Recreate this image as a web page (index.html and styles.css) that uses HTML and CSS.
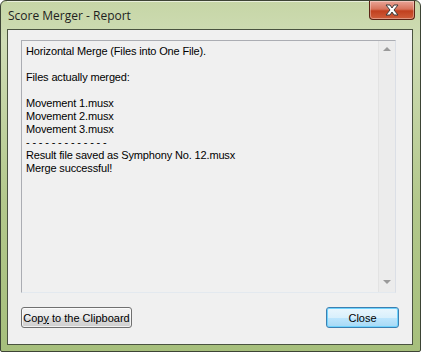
FILE: index.html
```html
<!DOCTYPE html>
<html lang="en">
<head>
  <meta charset="UTF-8">
  <title>Score Merger - Report</title>
  <link rel="stylesheet" href="styles.css">
</head>
<body>
  <div class="window">
    <div class="titlebar">
      <span class="title">Score Merger - Report</span>
      <div class="close-x">
        <svg width="22" height="12" viewBox="0 0 22 12">
          <path d="M5 1 L9 1 L11 4 L13 1 L17 1 L13 6 L17 11 L13 11 L11 8 L9 11 L5 11 L9 6 Z" fill="#fff" stroke="#3b3b3b" stroke-width="1" stroke-linejoin="round"/>
        </svg>
      </div>
    </div>
    <div class="client">
      <div class="report">
        <div class="report-text">
          <p>Horizontal Merge (Files into One File).</p>
          <p>&nbsp;</p>
          <p>Files actually merged:</p>
          <p>&nbsp;</p>
          <p>Movement 1.musx</p>
          <p>Movement 2.musx</p>
          <p>Movement 3.musx</p>
          <p>- - - - - - - - - - - - -</p>
          <p>Result file saved as Symphony No. 12.musx</p>
          <p>Merge successful!</p>
        </div>
        <div class="scrollbar">
          <span class="arrow up"></span>
          <span class="arrow down"></span>
        </div>
      </div>
      <div class="buttons">
        <button class="btn btn-copy">Cop<u>y</u> to the Clipboard</button>
        <button class="btn btn-default">Close</button>
      </div>
    </div>
  </div>
</body>
</html>
```

FILE: styles.css
```css
body {
  margin: 0;
  background-color: #ffffff;
}

.window {
  width: 421px;
  height: 352px;
  box-sizing: border-box;
  border: 1px solid #3d4435;
  border-radius: 6px 6px 2px 2px;
  background: linear-gradient(to bottom, #c6d6a6 0px, #cfdcb5 40px, #b3c88c 200px, #a6bf7c 352px);
  padding: 0 7px 6px 6px;
  display: flex;
  flex-direction: column;
}

.titlebar {
  height: 28px;
  display: flex;
  align-items: flex-start;
  justify-content: space-between;
  box-shadow: inset 0 1px 0 rgba(255, 255, 255, 0.6);
}

.title {
  font-family: "Open Sans", "Noto Sans", sans-serif;
  font-size: 12px;
  color: #1e1e1e;
  margin-top: 6px;
  margin-left: 1px;
}

.close-x {
  width: 46px;
  height: 19px;
  margin-right: -2px;
  box-sizing: border-box;
  border: 1px solid #5a2416;
  border-top: none;
  border-radius: 0 0 4px 4px;
  background: linear-gradient(to bottom, #e9a597 0%, #d7735b 45%, #c1401f 55%, #cf5e3b 100%);
  display: flex;
  align-items: center;
  justify-content: center;
  box-shadow: inset 0 0 0 1px rgba(255, 255, 255, 0.35);
}

.client {
  flex: 1;
  background-color: #f0f0f0;
  border: 1px solid #4a5340;
  padding: 10px 16px 16px 13px;
  display: flex;
  flex-direction: column;
}

.report {
  flex: 1;
  display: flex;
  border: 1px solid #abadb3;
  border-bottom-color: #e3e9ef;
  border-right-color: #dbdfe6;
  background-color: #f0f0f0;
}

.report-text {
  flex: 1;
  padding: 4px 4px;
  font-family: "Liberation Sans", Arial, sans-serif;
  font-size: 11px;
  line-height: 13px;
  letter-spacing: -0.15px;
  color: #000;
}

.report-text p {
  margin: 0;
}

.scrollbar {
  width: 16px;
  border-left: 1px solid #e3e3e3;
  background-color: #ececec;
  display: flex;
  flex-direction: column;
  justify-content: space-between;
  align-items: center;
  padding: 6px 0 8px;
}

.arrow {
  width: 0;
  height: 0;
  border-left: 4px solid transparent;
  border-right: 4px solid transparent;
}

.arrow.up {
  border-bottom: 4px solid #9a9a9a;
}

.arrow.down {
  border-top: 4px solid #9a9a9a;
}

.buttons {
  display: flex;
  justify-content: space-between;
  margin-top: 14px;
}

.btn {
  height: 21px;
  padding: 0 3px;
  border: 1px solid #707070;
  border-radius: 3px;
  background: linear-gradient(to bottom, #f2f2f2 0%, #ebebeb 50%, #dddddd 51%, #cfcfcf 100%);
  box-shadow: inset 0 0 0 1px rgba(255, 255, 255, 0.7);
  font-family: "Liberation Sans", Arial, sans-serif;
  font-size: 11px;
  white-space: nowrap;
  color: #000;
}

.btn-copy {
  width: 111px;
  padding: 0;
}

.btn-default {
  width: 73px;
  margin-right: -3px;
  border-color: #3c7fb1;
  background: linear-gradient(to bottom, #eaf6fd 0%, #d9f0fc 50%, #bee6fd 51%, #a7d9f5 100%);
  box-shadow: inset 0 0 0 1px #6fd3fd;
}
```
